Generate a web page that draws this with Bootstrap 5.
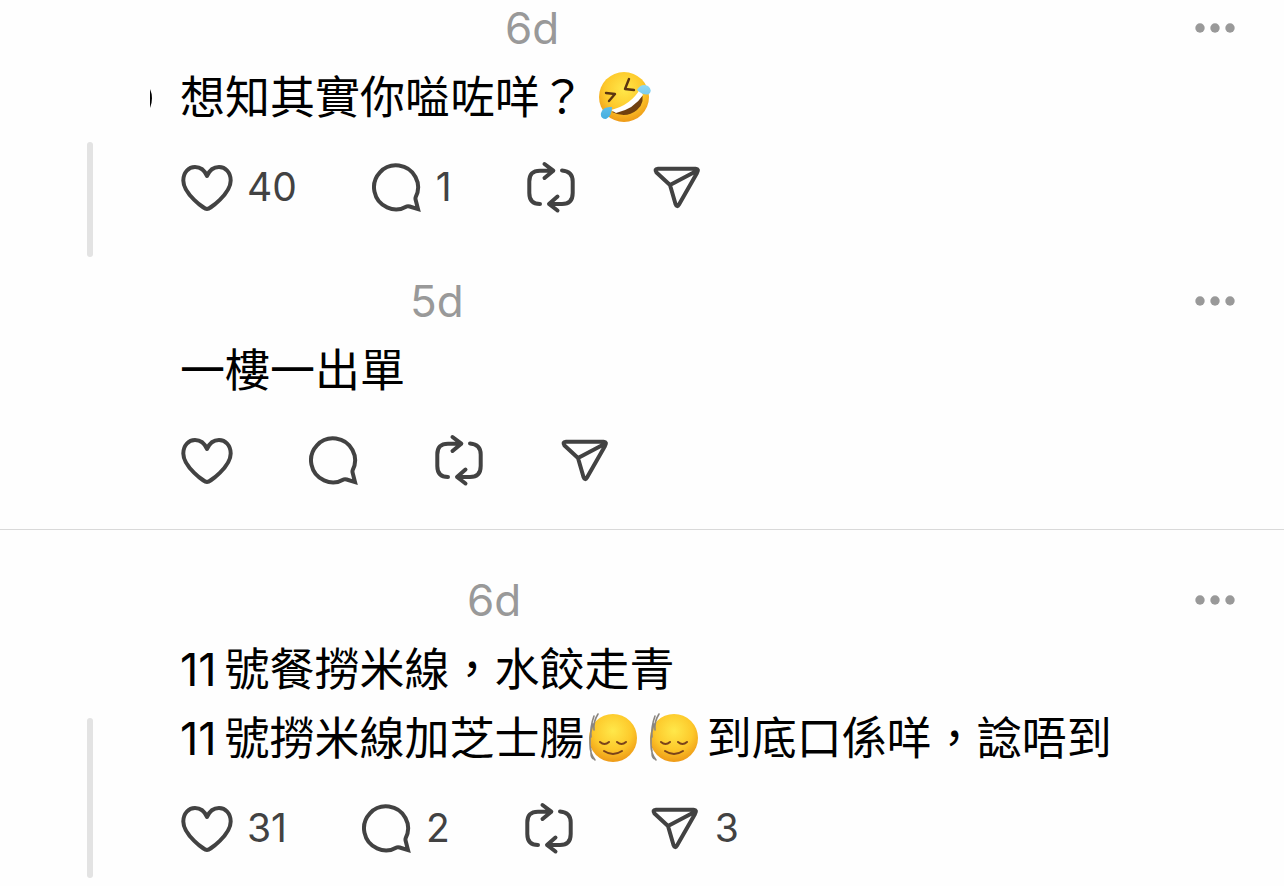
<!DOCTYPE html>
<html lang="zh-HK">
<head>
<meta charset="utf-8">
<meta name="viewport" content="width=device-width, initial-scale=1">
<title>Thread</title>
<link href="https://cdn.jsdelivr.net/npm/bootstrap@5.3.0/dist/css/bootstrap.min.css" rel="stylesheet">
<style>
  body { background: #fefefe; color: #000; font-family: Inter, "Noto Sans CJK TC", sans-serif; }
  .gutter { width: 180px; }
  .avatar-slot { height: 142px; }
  .rail { width: 6px; border-radius: 3px; background: #e3e3e3; margin-bottom: 16px; }
  .post-last .rail { margin-top: 4px; margin-bottom: 0; }
  .post { padding-bottom: 59px; }
  .post .gutter { margin-bottom: -59px; }
  .post-end { padding-bottom: 42px; border-bottom: 1px solid #d9d9d9; }
  .post-last { padding-top: 42px; padding-bottom: 31px; }
  .post-last .gutter { margin-bottom: -23px; }
  .post-head { height: 56px; padding-right: 49px; }
  .name-long { width: 325px; }
  .name-short { width: 230px; }
  .name-mid { width: 287px; }
  .stamp { font-size: 44px; line-height: 56px; color: #999; }
  .more { color: #999; }
  .post-text { font-size: 45px; line-height: 69px; margin: 7px 0 28px; }
  .numeral { margin-right: 8px; }
  .emoji { width: 54px; height: 54px; vertical-align: -10px; }
  .emoji-gap { margin-left: 13px; }
  .emoji-pair { margin-right: 7px; }
  .actions { gap: 72px; }
  .act { color: #424242; font-size: 39px; line-height: 54px; gap: 13px; }
  .act svg { width: 54px; height: 54px; fill: none; stroke: currentColor; stroke-width: 4; }
</style>
</head>
<body>
<svg class="position-absolute" width="0" height="0" aria-hidden="true">
  <defs>
    <radialGradient id="skin" cx=".5" cy=".35" r=".65"><stop offset="0" stop-color="#ffe84a"/><stop offset=".6" stop-color="#fdc92b"/><stop offset="1" stop-color="#ee9a17"/></radialGradient>
    <linearGradient id="tear" x1="0" y1="0" x2="0" y2="1"><stop offset="0" stop-color="#8fd8f4"/><stop offset="1" stop-color="#45aee0"/></linearGradient>
  </defs>
  <symbol id="heart" viewBox="0 0 54 54"><path stroke-linejoin="round" d="M27 49C24.500 49 3.300 34 3.300 20.500 3.300 12.500 8.500 7 15 7 20.500 7 24.500 10 27 16 29.500 10 33.500 7 39 7 45.500 7 50.700 12.500 50.700 20.500 50.700 34 29.500 49 27 49Z"/></symbol>
  <symbol id="reply" viewBox="0 0 54 54"><path d="M38.200 46.300A22 22 0 1 1 46.700 37.200Q46.200 38.500 46.700 40L49 49.100 40.700 46.500Q39.200 46 38.200 46.300Z"/></symbol>
  <symbol id="repost" viewBox="0 0 54 54"><path stroke-linecap="round" stroke-linejoin="round" d="M16 44C8.500 44 5.300 40 5.300 33V21.500C5.300 14.500 8.500 10.700 16 10.700H29M20.500 4 29.300 10.700 20.500 18M38 10.500C45 11 48.700 14.500 48.700 21.500V33C48.700 40 45 44 38 44H25.500M33.500 36.500 25 44 33.500 50.500"/></symbol>
  <symbol id="send" viewBox="0 0 54 54"><path stroke-linejoin="round" stroke-linecap="round" d="M8 8.700H45.500Q49.500 9 47 13L29 44.500Q27 48 25.500 44L20 25 6.500 12.500Q4 9 8 8.700ZM20 25 46.500 11"/></symbol>
  <symbol id="dots" viewBox="0 0 40 10"><g fill="currentColor"><circle cx="5" cy="5" r="4.700"/><circle cx="20" cy="5" r="4.700"/><circle cx="35" cy="5" r="4.700"/></g></symbol>
  <symbol id="calm" viewBox="0 0 54 54">
    <circle cx="28" cy="27" r="24" fill="url(#skin)"/>
    <path fill="none" stroke="#7a431a" stroke-width="2" stroke-linecap="round" d="M15 31Q19.500 35 24 31M32 31Q36.500 35 41 31M19 40Q28 46 37 40"/>
    <path fill="none" stroke="#8b8680" stroke-width="1.600" stroke-linecap="round" d="M9 5Q5 16 6 26M13 3Q8 11 9 19M8 13Q3 28 6 40M5 34Q5 43 10 49M6 42Q6 47 9 48"/>
  </symbol>
  <symbol id="rofl" viewBox="0 0 54 54">
    <circle cx="26" cy="27" r="25" fill="url(#skin)"/>
    <path d="M14 42Q34 36 43 21Q48 32 39 40Q28 49 14 42Z" fill="#70400f"/>
    <path d="M13 40Q33 35 42 19L45 25Q36 39 18 43Z" fill="#fff"/>
    <path d="M8 23 17 24 11 31M31 9 27 19 36 20" fill="none" stroke="#5b3510" stroke-width="2.400" stroke-linecap="round" stroke-linejoin="round"/>
    <path d="M14 37Q5 36 3 43 2 49 8 49 14 46 14 37ZM39 20Q43 13 50 16 55 20 51 24 46 26 39 20Z" fill="url(#tear)"/>
  </symbol>
</svg>

<main>
  <article class="post d-flex">
    <div class="gutter flex-shrink-0 d-flex flex-column align-items-center">
      <svg class="avatar-slot w-100 flex-shrink-0" viewBox="0 0 180 142" aria-hidden="true"><path d="M150 89Q154 98 150 108Z"/></svg>
      <div class="rail flex-grow-1"></div>
    </div>
    <div class="flex-grow-1">
      <header class="post-head d-flex align-items-center">
        <span class="name-long"></span><time class="stamp">6d</time>
        <button class="more btn p-0 border-0 ms-auto d-flex" type="button" aria-label="More"><svg width="40" height="10"><use href="#dots"/></svg></button>
      </header>
      <p class="post-text">想知其實你嗌咗咩？<svg class="emoji emoji-gap" role="img" aria-label="🤣"><use href="#rofl"/></svg></p>
      <div class="actions d-flex">
        <button class="act btn p-0 border-0 d-flex" type="button" aria-label="Like"><svg><use href="#heart"/></svg><span>40</span></button>
        <button class="act btn p-0 border-0 d-flex" type="button" aria-label="Reply"><svg><use href="#reply"/></svg><span>1</span></button>
        <button class="act btn p-0 border-0 d-flex" type="button" aria-label="Repost"><svg><use href="#repost"/></svg></button>
        <button class="act btn p-0 border-0 d-flex" type="button" aria-label="Share"><svg><use href="#send"/></svg></button>
      </div>
    </div>
  </article>

  <article class="post post-end d-flex">
    <div class="gutter flex-shrink-0"></div>
    <div class="flex-grow-1">
      <header class="post-head d-flex align-items-center">
        <span class="name-short"></span><time class="stamp">5d</time>
        <button class="more btn p-0 border-0 ms-auto d-flex" type="button" aria-label="More"><svg width="40" height="10"><use href="#dots"/></svg></button>
      </header>
      <p class="post-text">一樓一出單</p>
      <div class="actions d-flex">
        <button class="act btn p-0 border-0 d-flex" type="button" aria-label="Like"><svg><use href="#heart"/></svg></button>
        <button class="act btn p-0 border-0 d-flex" type="button" aria-label="Reply"><svg><use href="#reply"/></svg></button>
        <button class="act btn p-0 border-0 d-flex" type="button" aria-label="Repost"><svg><use href="#repost"/></svg></button>
        <button class="act btn p-0 border-0 d-flex" type="button" aria-label="Share"><svg><use href="#send"/></svg></button>
      </div>
    </div>
  </article>

  <article class="post post-last d-flex">
    <div class="gutter flex-shrink-0 d-flex flex-column align-items-center">
      <div class="avatar-slot flex-shrink-0"></div>
      <div class="rail flex-grow-1"></div>
    </div>
    <div class="flex-grow-1">
      <header class="post-head d-flex align-items-center">
        <span class="name-mid"></span><time class="stamp">6d</time>
        <button class="more btn p-0 border-0 ms-auto d-flex" type="button" aria-label="More"><svg width="40" height="10"><use href="#dots"/></svg></button>
      </header>
      <p class="post-text"><span class="numeral">11</span>號餐撈米線，水餃走青<br><span class="numeral">11</span>號撈米線加芝士腸<svg class="emoji emoji-pair" role="img" aria-label="Relieved face"><use href="#calm"/></svg><svg class="emoji emoji-pair" role="img" aria-label="Relieved face"><use href="#calm"/></svg>到底口係咩，諗唔到</p>
      <div class="actions d-flex">
        <button class="act btn p-0 border-0 d-flex" type="button" aria-label="Like"><svg><use href="#heart"/></svg><span>31</span></button>
        <button class="act btn p-0 border-0 d-flex" type="button" aria-label="Reply"><svg><use href="#reply"/></svg><span>2</span></button>
        <button class="act btn p-0 border-0 d-flex" type="button" aria-label="Repost"><svg><use href="#repost"/></svg></button>
        <button class="act btn p-0 border-0 d-flex" type="button" aria-label="Share"><svg><use href="#send"/></svg><span>3</span></button>
      </div>
    </div>
  </article>
</main>
<script src="https://cdn.jsdelivr.net/npm/bootstrap@5.3.0/dist/js/bootstrap.bundle.min.js"></script>
</body>
</html>
